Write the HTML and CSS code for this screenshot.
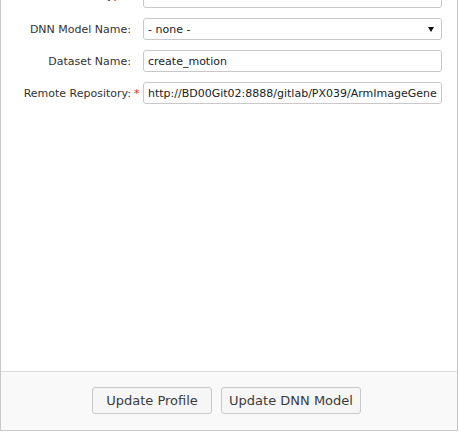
FILE: index.html
```html
<!DOCTYPE html>
<html>
<head>
<meta charset="utf-8">
<link rel="stylesheet" href="styles.css">
</head>
<body>
<div class="panel">
  <div class="form">
    <div class="row row-first">
      <label class="lbl">Model Type:</label>
      <span class="req"></span>
      <input class="field" type="text" value="">
    </div>
    <div class="row">
      <label class="lbl">DNN Model Name:</label>
      <span class="req"></span>
      <div class="select field">
        <span class="sel-text">- none -</span>
        <svg class="arrow" width="6" height="5" viewBox="0 0 6 5"><path d="M0 0H6L3 5Z" fill="#111"/></svg>
      </div>
    </div>
    <div class="row">
      <label class="lbl">Dataset Name:</label>
      <span class="req"></span>
      <input class="field" type="text" value="create_motion">
    </div>
    <div class="row">
      <label class="lbl">Remote Repository:</label>
      <span class="req">*</span>
      <input class="field" type="text" value="http://BD00Git02:8888/gitlab/PX039/ArmImageGenerator.git">
    </div>
  </div>
  <div class="footer">
    <button class="btn btn-profile">Update Profile</button>
    <button class="btn btn-dnn">Update DNN Model</button>
  </div>
</div>
</body>
</html>
```

FILE: styles.css
```css
html, body {
  margin: 0;
  padding: 0;
  background: #fff;
}
body {
  font-family: "DejaVu Sans", Verdana, sans-serif;
  font-size: 11px;
  color: #333;
  overflow: hidden;
}
.panel {
  box-sizing: border-box;
  width: 458px;
  height: 455px;
  margin-top: -24px;
  border: 1px solid #c8c8c8;
  border-top: 0;
  display: flex;
  flex-direction: column;
}
.form {
  flex: 1;
  padding-top: 10px;
}
.row {
  display: grid;
  grid-template-columns: 130px 12px 299px;
  height: 22px;
  margin-bottom: 10px;
}
.lbl {
  text-align: right;
  padding-top: 5px;
  line-height: 13px;
  white-space: nowrap;
  color: #333;
}
.row-first .lbl {
  padding-top: 3px;
}
.req {
  color: #d9262b;
  padding-left: 3px;
  padding-top: 5px;
  line-height: 13px;
}
.field {
  box-sizing: border-box;
  height: 22px;
  width: 299px;
  margin: 0;
  border: 1px solid #c8c8c8;
  border-radius: 3px;
  padding: 0 4px;
  font-family: inherit;
  font-size: 11px;
  color: #222;
  background: #fff;
  outline: none;
}
.select {
  position: relative;
  display: flex;
  align-items: center;
}
.arrow {
  position: absolute;
  right: 7px;
  top: 8px;
}
.footer {
  height: 59px;
  box-sizing: border-box;
  border-top: 1px solid #dcdcdc;
  background: #f9f9f9;
  display: flex;
  justify-content: center;
  align-items: flex-start;
  gap: 9px;
  padding-top: 15px;
  padding-right: 5px;
}
.btn {
  box-sizing: border-box;
  height: 27px;
  border: 1px solid #c8c8c8;
  border-radius: 3px;
  background: #f6f6f6;
  font-family: inherit;
  font-size: 13px;
  color: #3a3a3a;
  padding: 0;
  margin: 0;
}
.btn-profile { width: 120px; }
.btn-dnn { width: 140px; }
```
